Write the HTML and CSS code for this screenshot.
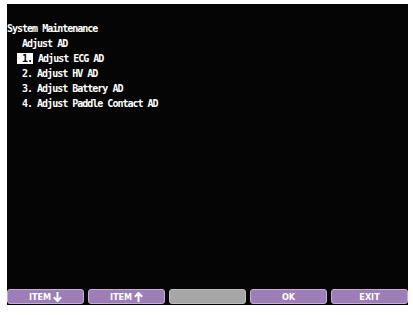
FILE: index.html
```html
<!DOCTYPE html>
<html lang="en">
<head>
    <meta charset="UTF-8">
    <meta name="viewport" content="width=device-width, initial-scale=1.0">
    <title>System Maintenance</title>
    <link rel="stylesheet" href="styles.css">
</head>
<body>
    <div class="screen">
        <div class="menu">
            <div class="title">System Maintenance</div>
            <div class="subtitle">Adjust AD</div>
            <ul class="items">
                <li class="item selected"><span class="num">1.</span> Adjust ECG AD</li>
                <li class="item"><span class="num">2.</span> Adjust HV AD</li>
                <li class="item"><span class="num">3.</span> Adjust Battery AD</li>
                <li class="item"><span class="num">4.</span> Adjust Paddle Contact AD</li>
            </ul>
        </div>

        <div class="softkeys">
            <div class="key">ITEM
                <svg class="arrow" width="9" height="10" viewBox="0 0 9 10">
                    <path d="M4.5 0 V9 M0.8 5.2 L4.5 9 L8.2 5.2" fill="none" stroke="#fff" stroke-width="2"/>
                </svg>
            </div>
            <div class="key">ITEM
                <svg class="arrow" width="9" height="10" viewBox="0 0 9 10">
                    <path d="M4.5 10 V1 M0.8 4.8 L4.5 1 L8.2 4.8" fill="none" stroke="#fff" stroke-width="2"/>
                </svg>
            </div>
            <div class="key blank"></div>
            <div class="key">OK</div>
            <div class="key">EXIT</div>
        </div>
    </div>
</body>
</html>
```

FILE: styles.css
```css
* {
    margin: 0;
    padding: 0;
    box-sizing: border-box;
}

body {
    background: #ffffff;
    font-family: 'DejaVu Sans Mono', 'Liberation Mono', monospace;
}

.screen {
    margin: 4px 5px 0 7px;
    width: 401px;
    height: 301px;
    background: #050505;
    display: flex;
    flex-direction: column;
    padding-bottom: 1px;
}

.menu {
    flex: 1;
    padding-top: 17px;
    color: #ffffff;
    font-size: 10px;
    font-weight: bold;
    letter-spacing: -1px;
    line-height: 15px;
}

.subtitle {
    padding-left: 15px;
}

.items {
    list-style: none;
}

.item {
    padding-left: 15px;
    white-space: pre;
}

.num {
    display: inline-block;
}

.selected .num {
    background: #ffffff;
    color: #000000;
    margin-left: -5px;
    padding: 0 1px 0 5px;
    line-height: 11px;
}

.softkeys {
    display: flex;
    gap: 4px;
}

.key {
    flex: 1;
    height: 15px;
    background: #9d7eb8;
    border: 1px solid #c4aed6;
    border-radius: 3px;
    color: #ffffff;
    font-family: 'DejaVu Sans Condensed', 'DejaVu Sans', sans-serif;
    font-stretch: condensed;
    font-weight: bold;
    font-size: 9px;
    display: flex;
    align-items: center;
    justify-content: center;
    gap: 2px;
}

.key.blank {
    background: #a6a6a6;
    border-color: #bdbdbd;
}

.arrow {
    display: block;
}
```
